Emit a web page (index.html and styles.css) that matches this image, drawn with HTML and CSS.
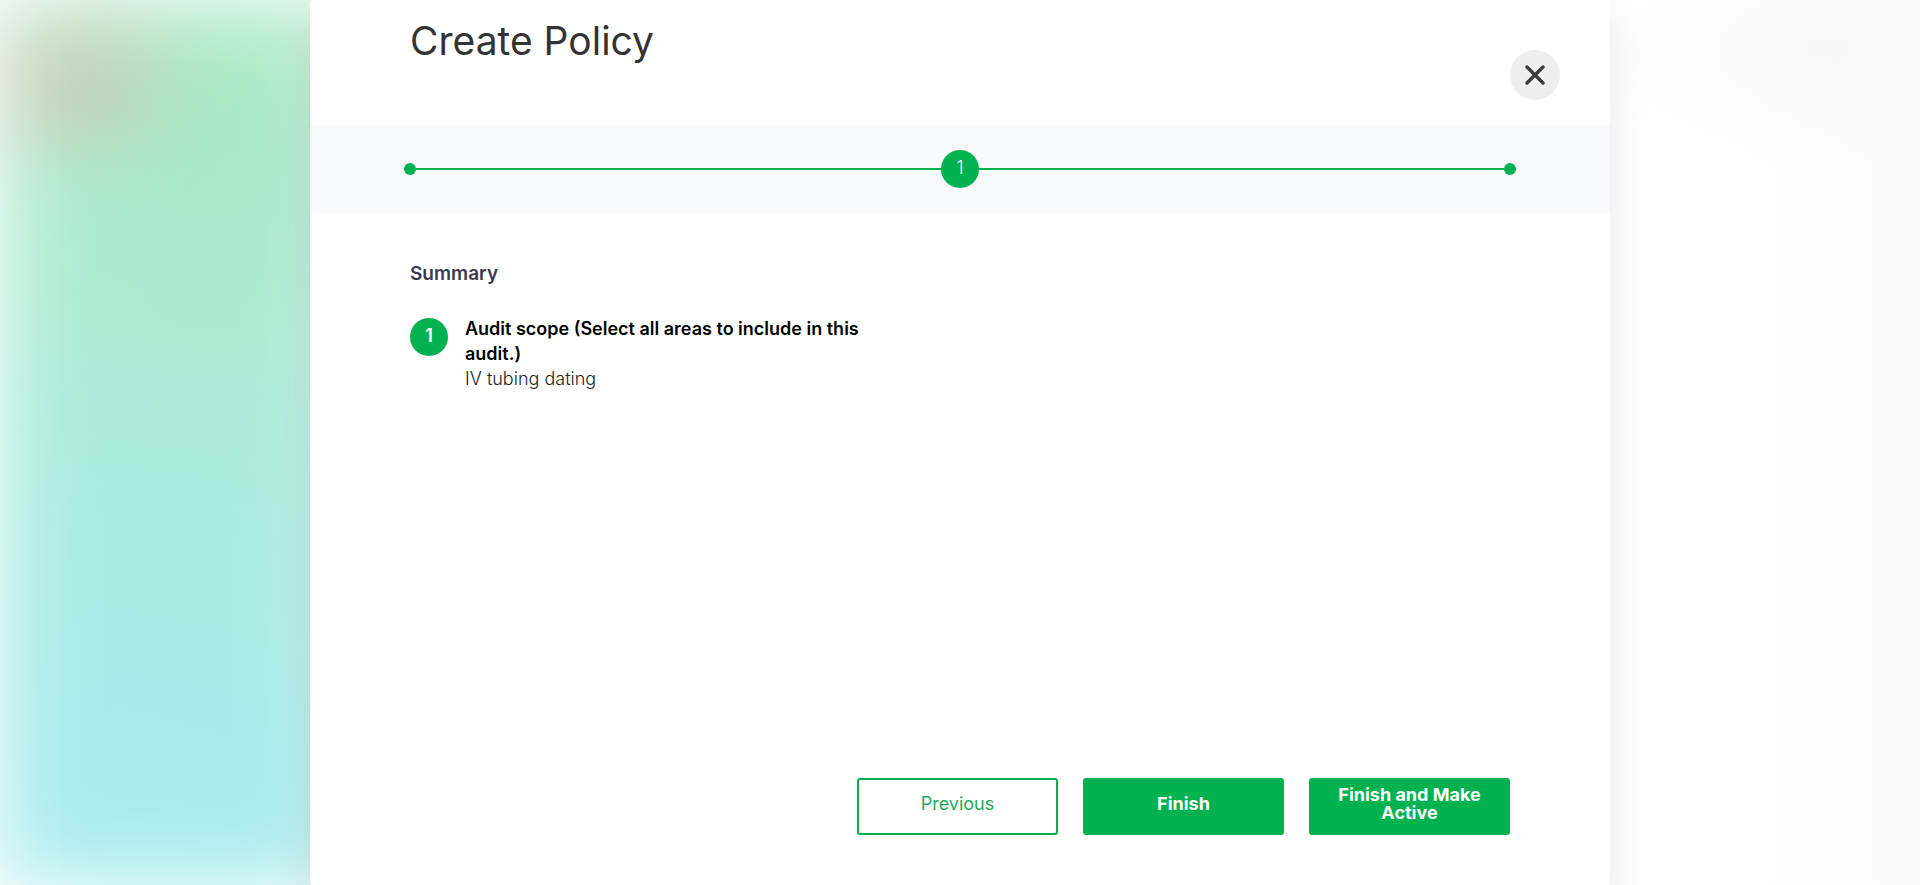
FILE: index.html
```html
<!DOCTYPE html>
<html lang="en">
<head>
<meta charset="utf-8">
<meta name="viewport" content="width=device-width, initial-scale=1">
<title>Create Policy</title>
<link rel="stylesheet" href="styles.css">
</head>
<body>
<div class="backdrop" aria-hidden="true">
  <div class="backdrop-nav"></div>
  <div class="backdrop-page"></div>
</div>
<main class="modal" role="dialog" aria-labelledby="modal-title">
  <header class="modal-header">
    <h1 class="modal-title" id="modal-title">Create Policy</h1>
    <button class="close" type="button" aria-label="Close">
      <svg class="close-icon" viewBox="0 0 20 20" aria-hidden="true"><path d="M2 2L18 18M18 2L2 18"/></svg>
    </button>
  </header>
  <nav class="progress" aria-label="Progress">
    <span class="dot"></span>
    <span class="track"></span>
    <span class="badge badge-light">1</span>
    <span class="track"></span>
    <span class="dot"></span>
  </nav>
  <section class="content">
    <h2 class="section-title">Summary</h2>
    <ol class="summary">
      <li class="summary-item">
        <span class="badge">1</span>
        <div class="summary-text">
          <h3 class="question">Audit scope (Select all areas to include in this audit.)</h3>
          <p class="answer">IV tubing dating</p>
        </div>
      </li>
    </ol>
  </section>
  <footer class="actions">
    <button class="button button-outline" type="button">Previous</button>
    <button class="button" type="button">Finish</button>
    <button class="button" type="button">Finish and Make Active</button>
  </footer>
</main>
</body>
</html>
```
FILE: styles.css
```css
* { box-sizing: border-box; }

body {
  margin: 0;
  height: 100vh;
  overflow: hidden;
  background: #fff;
  font-family: Inter, "Liberation Sans", sans-serif;
  font-size: 18px;
  line-height: 25px;
  color: #000;
}

h1, h2, h3, p, ol { margin: 0; padding: 0; }

.backdrop {
  position: absolute;
  inset: 0;
  overflow: hidden;
  display: flex;
}

.backdrop-nav {
  flex: 0 0 340px;
  background:
    radial-gradient(ellipse 130px 80px at 70px 85px, #d2bfb0 0%, #d2bfb088 50%, transparent 100%),
    radial-gradient(ellipse 150px 200px at 210px 150px, #a4e8c6, transparent),
    linear-gradient(15deg, #a8ebf0 0%, transparent 60%),
    linear-gradient(#b4ecc6 0%, #aeebd0 25%, #abead8 50%, #a9eade 75%, #a4eae6 100%);
  filter: blur(42px);
}

.backdrop-page {
  flex: 1;
  background:
    radial-gradient(ellipse 240px 120px at 94% 50px, #f8f8f8, transparent),
    linear-gradient(90deg, #fff 88%, #fafafa 100%);
}

.modal {
  position: relative;
  display: flex;
  flex-direction: column;
  width: 100%;
  max-width: 1300px;
  min-height: 100%;
  margin: 0 auto;
  padding-bottom: 50px;
  background: #fff;
  border-radius: 3px;
  box-shadow: 0 20px 40px rgba(50, 50, 80, 0.12);
}

.modal-header {
  display: flex;
  justify-content: space-between;
  padding: 16px 50px 25px 100px;
}

.modal-title {
  font-size: 39px;
  line-height: 50px;
  font-weight: 400;
  color: #333;
}

.close {
  width: 50px;
  height: 50px;
  margin-top: 34px;
  padding: 0;
  display: grid;
  place-items: center;
  border: 0;
  border-radius: 50%;
  background: #efefef;
}

.close-icon {
  width: 20px;
  height: 20px;
  fill: none;
  stroke: #3c3c3c;
  stroke-width: 3.4;
  stroke-linecap: round;
}

.progress {
  display: flex;
  align-items: center;
  padding: 25px 94px;
  background: #f8fafc;
}

.dot {
  width: 12px;
  height: 12px;
  border-radius: 50%;
  background: #00b14f;
}

.track {
  flex: 1;
  height: 2px;
  background: #00b14f;
}

.badge {
  flex: none;
  width: 38px;
  height: 38px;
  padding-bottom: 4px;
  display: grid;
  place-items: center;
  border-radius: 50%;
  background: #00b14f;
  color: #fff;
  font-weight: 600;
}

.badge-light { font-weight: 300; }

.content {
  flex: 1;
  padding: 48px 100px;
}

.section-title {
  font-size: 19px;
  line-height: 25px;
  font-weight: 600;
  color: #3a3a4e;
}

.summary {
  display: grid;
  grid-template-columns: 1fr 1fr;
  margin-top: 30px;
  list-style: none;
}

.summary-item {
  display: flex;
  gap: 17px;
  padding-right: 50px;
}

.summary-item .badge { margin-top: 2px; }

.question {
  font-size: 18px;
  line-height: 25px;
  font-weight: 600;
}

.answer {
  font-weight: 300;
  color: #222;
}

.actions {
  display: flex;
  flex-wrap: wrap;
  justify-content: flex-end;
  gap: 25px;
  padding: 0 100px;
}

.button {
  width: 201px;
  height: 57px;
  padding: 0 24px 6px;
  border: 2px solid #00b14f;
  border-radius: 3px;
  background: #00b14f;
  color: #fff;
  font: 700 18px/18px Inter, "Liberation Sans", sans-serif;
}

.button-outline {
  background: #fff;
  color: #1bac59;
  font-weight: 400;
}
```
